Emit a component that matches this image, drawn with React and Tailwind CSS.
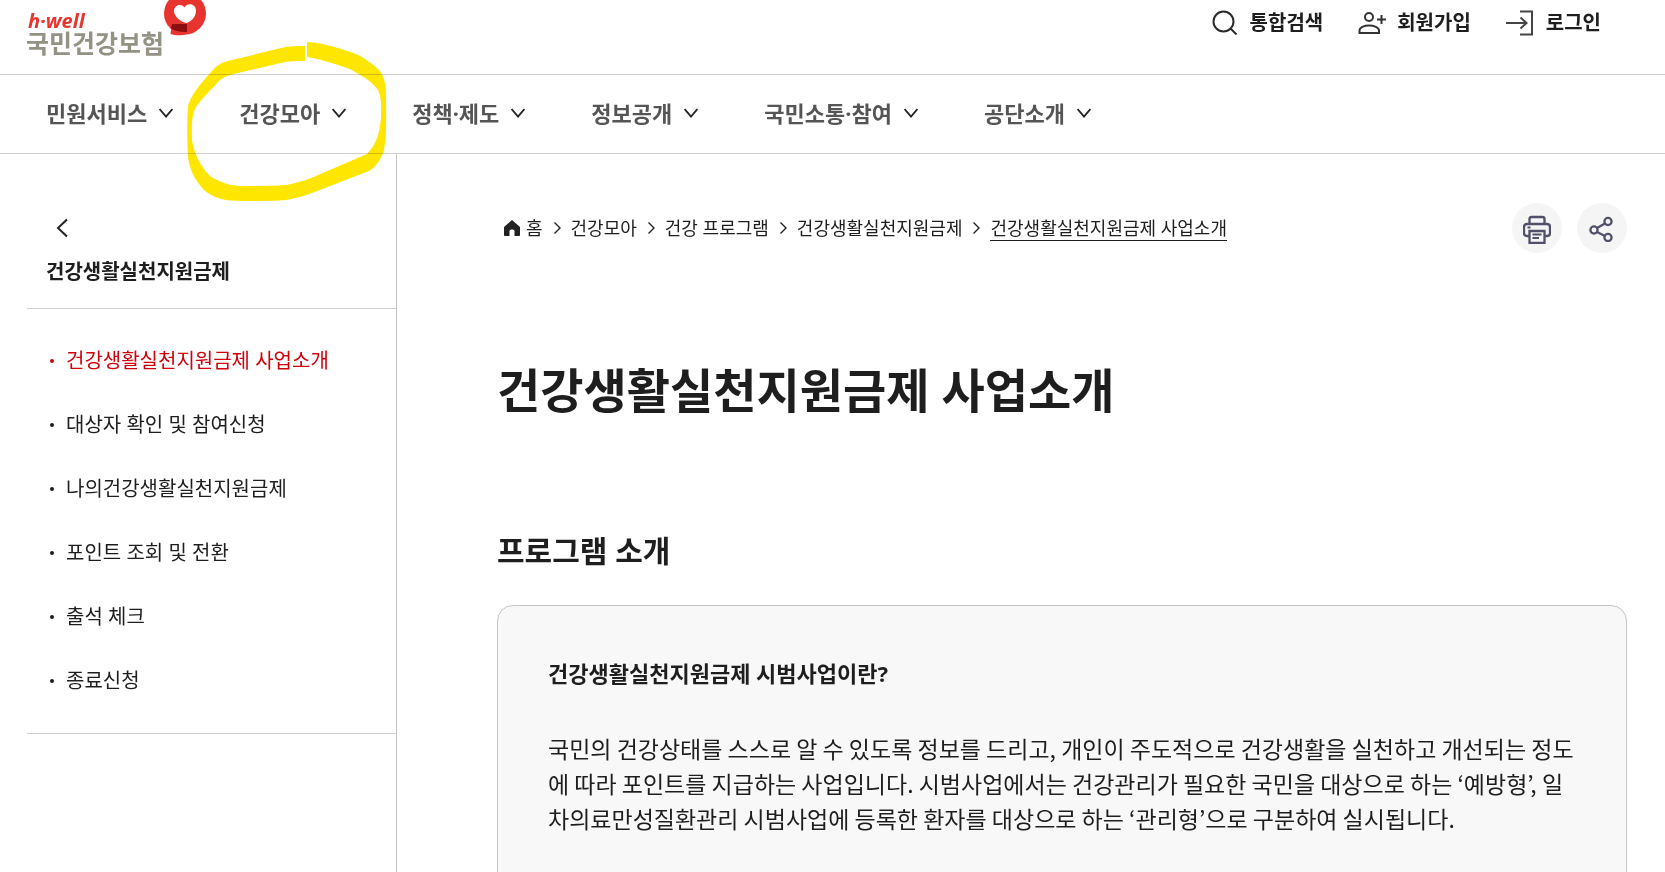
const gnb = ["민원서비스", "건강모아", "정책·제도", "정보공개", "국민소통·참여", "공단소개"];

const lnb = [
    "건강생활실천지원금제 사업소개",
    "대상자 확인 및 참여신청",
    "나의건강생활실천지원금제",
    "포인트 조회 및 전환",
    "출석 체크",
    "종료신청",
];

const crumbs = ["건강모아", "건강 프로그램", "건강생활실천지원금제"];

const DownIcon = () => (
    <svg width="14" height="10" viewBox="0 0 14 10" fill="none" stroke="#222" strokeWidth="1.8">
        <path d="M.6 1L7 8.5L13.4 1" />
    </svg>
);

const BackIcon = () => (
    <svg width="12" height="20" viewBox="0 0 12 20" fill="none" stroke="#222" strokeWidth="2">
        <path d="M11 1.5L2 10L11 18.5" />
    </svg>
);

const CrumbIcon = () => (
    <svg width="14" height="14" viewBox="0 0 14 14" fill="none" stroke="#222" strokeWidth="1.4">
        <path d="M4.5 1.5L10 7L4.5 12.5" />
    </svg>
);

const SearchIcon = () => (
    <svg width="26" height="26" viewBox="0 0 26 26" fill="none" stroke="#2b2b2b" strokeWidth="2">
        <circle cx="11.5" cy="11.5" r="10" />
        <path d="M18.5 18.5L24.5 24.5" />
    </svg>
);

const JoinIcon = () => (
    <svg width="28" height="24" viewBox="0 0 28 24" fill="none" stroke="#333" strokeWidth="2">
        <circle cx="11" cy="6" r="4" />
        <path d="M1.5 22V19.5C1.5 16.5 6 14.5 11 14.5S21 16.5 21 19.5V22Z" />
        <path d="M23.5 4V13M19 8.5H28" />
    </svg>
);

const LoginIcon = () => (
    <svg width="28" height="26" viewBox="0 0 28 26" fill="none" stroke="#444" strokeWidth="2">
        <path d="M14 1.5H26V24.5H14" />
        <path d="M0 13H20M14.5 7.5L20.5 13L14.5 18.5" />
    </svg>
);

const PrintIcon = () => (
    <svg width="28" height="31" viewBox="0 -3 28 31" fill="none" stroke="#50506a" strokeWidth="2.3">
        <path d="M6.5 8V3C6.5 1.8 7 1 8.5 1H19.5C21 1 21.5 1.8 21.5 3V8" />
        <path d="M6 20H4C2 20 1 19 1 17V11C1 9 2 8 4 8H24C26 8 27 9 27 11V17C27 19 26 20 24 20H22" />
        <path d="M6.5 15H21.5V27H6.5Z" />
        <path d="M9.5 18.5H18.5M9.5 22H16M4.5 11.5H7.5" strokeWidth="2" />
    </svg>
);

const ShareIcon = () => (
    <svg width="28" height="28" viewBox="0 0 28 28" fill="none" stroke="#50506a" strokeWidth="2.3">
        <circle cx="6" cy="16" r="3.6" />
        <circle cx="20" cy="7.5" r="3.6" />
        <circle cx="20" cy="23.5" r="3.6" />
        <path d="M9 14L17 9.5M9 18L17 22" />
    </svg>
);

const Logo = () => (
    <a href="#" className="flex items-start">
        <span className="flex flex-col pt-[11px]">
            <span className="pl-0.5 font-['Open_Sans','Noto_Sans',sans-serif] text-xl leading-5 font-bold italic text-[#e8342f]">
                h·well
            </span>
            <span className="text-[25px] leading-6 font-bold text-[#949284]">국민건강보험</span>
        </span>
        <svg width="44" height="36" viewBox="2 0 44 36">
            <circle cx="23" cy="13.5" r="21" fill="#e8342f" />
            <path d="M10 24L8.5 34C13 35.5 20 36 25 34L28 26Z" fill="#e8342f" />
            <path d="M10 24H25V32C19 32.5 13 31 9 28.5Z" fill="#8c0d10" />
            <path d="M25 23C18 22 12 16 12 11C12 5 19 3 22.5 7.5C25 2.5 34 3 34 11C34 16 30 21 25 23Z" fill="#fff" />
        </svg>
    </a>
);

// 형광펜 표시
const Marker = () => (
    <svg className="pointer-events-none absolute top-0 left-0 mix-blend-multiply" width="400" height="210" viewBox="0 0 400 210" fill="#ffe600">
        <path
            fillRule="evenodd"
            d="M305 46C297 46 289 46 281 48L228 61C221 63 217 65 213 70C204 80 190 95 188 107C187 118 187 140 188 157C190 173 197 182 204 190C213 198 224 201 243 201C259 201 275 201 286 200C300 198 315 192 325 188L369 171C376 167 382 158 384 150C387 135 386 115 386 95C386 84 384 74 377 68C370 62 363 57 356 54C342 49 325 43 307 42V57C320 59 335 64 350 69C360 75 371 80 378 90C382 98 381 107 381 117C380 131 377 144 367 154L325 172C310 179 298 183 286 185C274 186 262 186 243 186C230 186 219 182 210 176C202 168 194 155 192 140C192 128 191 118 195 109C199 101 210 91 218 82C222 78 226 76 234 74L281 63C289 61 297 61 305 61Z"
        />
    </svg>
);

export default function App() {
    return (
        <div className="relative flex h-screen flex-col overflow-hidden bg-white font-['Noto_Sans','Noto_Sans_CJK_KR',sans-serif] text-[#1e1e1e]">
            <header>
                <div className="flex h-[75px] justify-between border-b border-[#d0d0d0] pr-16 pl-[26px]">
                    <Logo />
                    <ul className="flex h-[46px] items-center gap-[35px] text-xl font-bold">
                        <li>
                            <button type="button" className="flex items-center gap-3">
                                <SearchIcon />
                                통합검색
                            </button>
                        </li>
                        <li>
                            <a href="#" className="flex items-center gap-[11px]">
                                <JoinIcon />
                                회원가입
                            </a>
                        </li>
                        <li>
                            <a href="#" className="flex items-center gap-3">
                                <LoginIcon />
                                로그인
                            </a>
                        </li>
                    </ul>
                </div>

                <nav className="flex h-[79px] items-center gap-[66px] border-b border-[#d0d0d0] pb-0.5 pl-[46px]">
                    {gnb.map((label) => (
                        <button
                            key={label}
                            type="button"
                            className="flex items-center gap-3 text-[22px] font-bold text-[#555]"
                        >
                            {label}
                            <DownIcon />
                        </button>
                    ))}
                </nav>
            </header>

            <div className="flex min-h-0 flex-1">
                {/* 좌측 메뉴 */}
                <aside className="ml-[27px] w-[370px] shrink-0 border-r border-[#c4c4c4]">
                    <div className="flex h-[155px] flex-col items-start border-b border-[#d0d0d0] pt-16 pl-[19px]">
                        <button type="button" aria-label="이전" className="pl-2.5">
                            <BackIcon />
                        </button>
                        <h2 className="mt-[18px] text-xl leading-8 font-bold">건강생활실천지원금제</h2>
                    </div>
                    <ul className="border-b border-[#d0d0d0] py-5 pl-[23px] text-xl">
                        {lnb.map((item, i) => (
                            <li key={item} className={`flex h-16 items-center gap-3 ${i === 0 ? "text-[#d0000b]" : ""}`}>
                                <span className="size-1 rounded-full bg-current"></span>
                                <a href="#">{item}</a>
                            </li>
                        ))}
                    </ul>
                </aside>

                <main className="min-w-0 flex-1 pt-[49px] pr-[38px] pl-[100px]">
                    <div className="flex items-center justify-between">
                        <nav className="flex items-center gap-[7px] pl-[7px] text-lg leading-6">
                            <a href="#" className="flex items-center gap-1.5">
                                <svg width="16" height="16" viewBox="0 0 16 16" fill="#222">
                                    <path d="M8 0L16 7V15C16 15.6 15.6 16 15 16H10.5V11C10.5 9 5.5 9 5.5 11V16H1C.4 16 0 15.6 0 15V7Z" />
                                </svg>
                                홈
                            </a>
                            {crumbs.map((item) => (
                                <span key={item} className="flex items-center gap-[7px]">
                                    <CrumbIcon />
                                    <a href="#">{item}</a>
                                </span>
                            ))}
                            <CrumbIcon />
                            <a href="#" className="border-b border-[#1e1e1e]">건강생활실천지원금제 사업소개</a>
                        </nav>
                        <div className="flex gap-[15px]">
                            <button type="button" aria-label="인쇄" className="flex size-[50px] items-center justify-center rounded-full bg-[#f5f5f5]">
                                <PrintIcon />
                            </button>
                            <button type="button" aria-label="공유" className="flex size-[50px] items-center justify-center rounded-full bg-[#f5f5f5]">
                                <ShareIcon />
                            </button>
                        </div>
                    </div>

                    <h1 className="mt-[101px] text-[47px] leading-[72px] font-bold">건강생활실천지원금제 사업소개</h1>
                    <h2 className="mt-[103px] text-[30px] leading-[44px] font-bold">프로그램 소개</h2>

                    <section className="mt-8 h-80 rounded-2xl border border-[#c4c4c4] bg-[#f8f8f8] pt-[49px] pr-10 pl-[50px]">
                        <h3 className="text-[22px] leading-9 font-bold">건강생활실천지원금제 시범사업이란?</h3>
                        <p className="mt-10 font-['Noto_Sans_CJK_KR','Noto_Sans',sans-serif] text-[23px] leading-[35px]">
                            국민의 건강상태를 스스로 알 수 있도록 정보를 드리고, 개인이 주도적으로 건강생활을 실천하고 개선되는 정도
                            <br />
                            에 따라 포인트를 지급하는 사업입니다. 시범사업에서는 건강관리가 필요한 국민을 대상으로 하는 ‘예방형’, 일
                            <br />
                            차의료만성질환관리 시범사업에 등록한 환자를 대상으로 하는 ‘관리형’으로 구분하여 실시됩니다.
                        </p>
                    </section>
                </main>
            </div>
            <Marker />
        </div>
    );
}
